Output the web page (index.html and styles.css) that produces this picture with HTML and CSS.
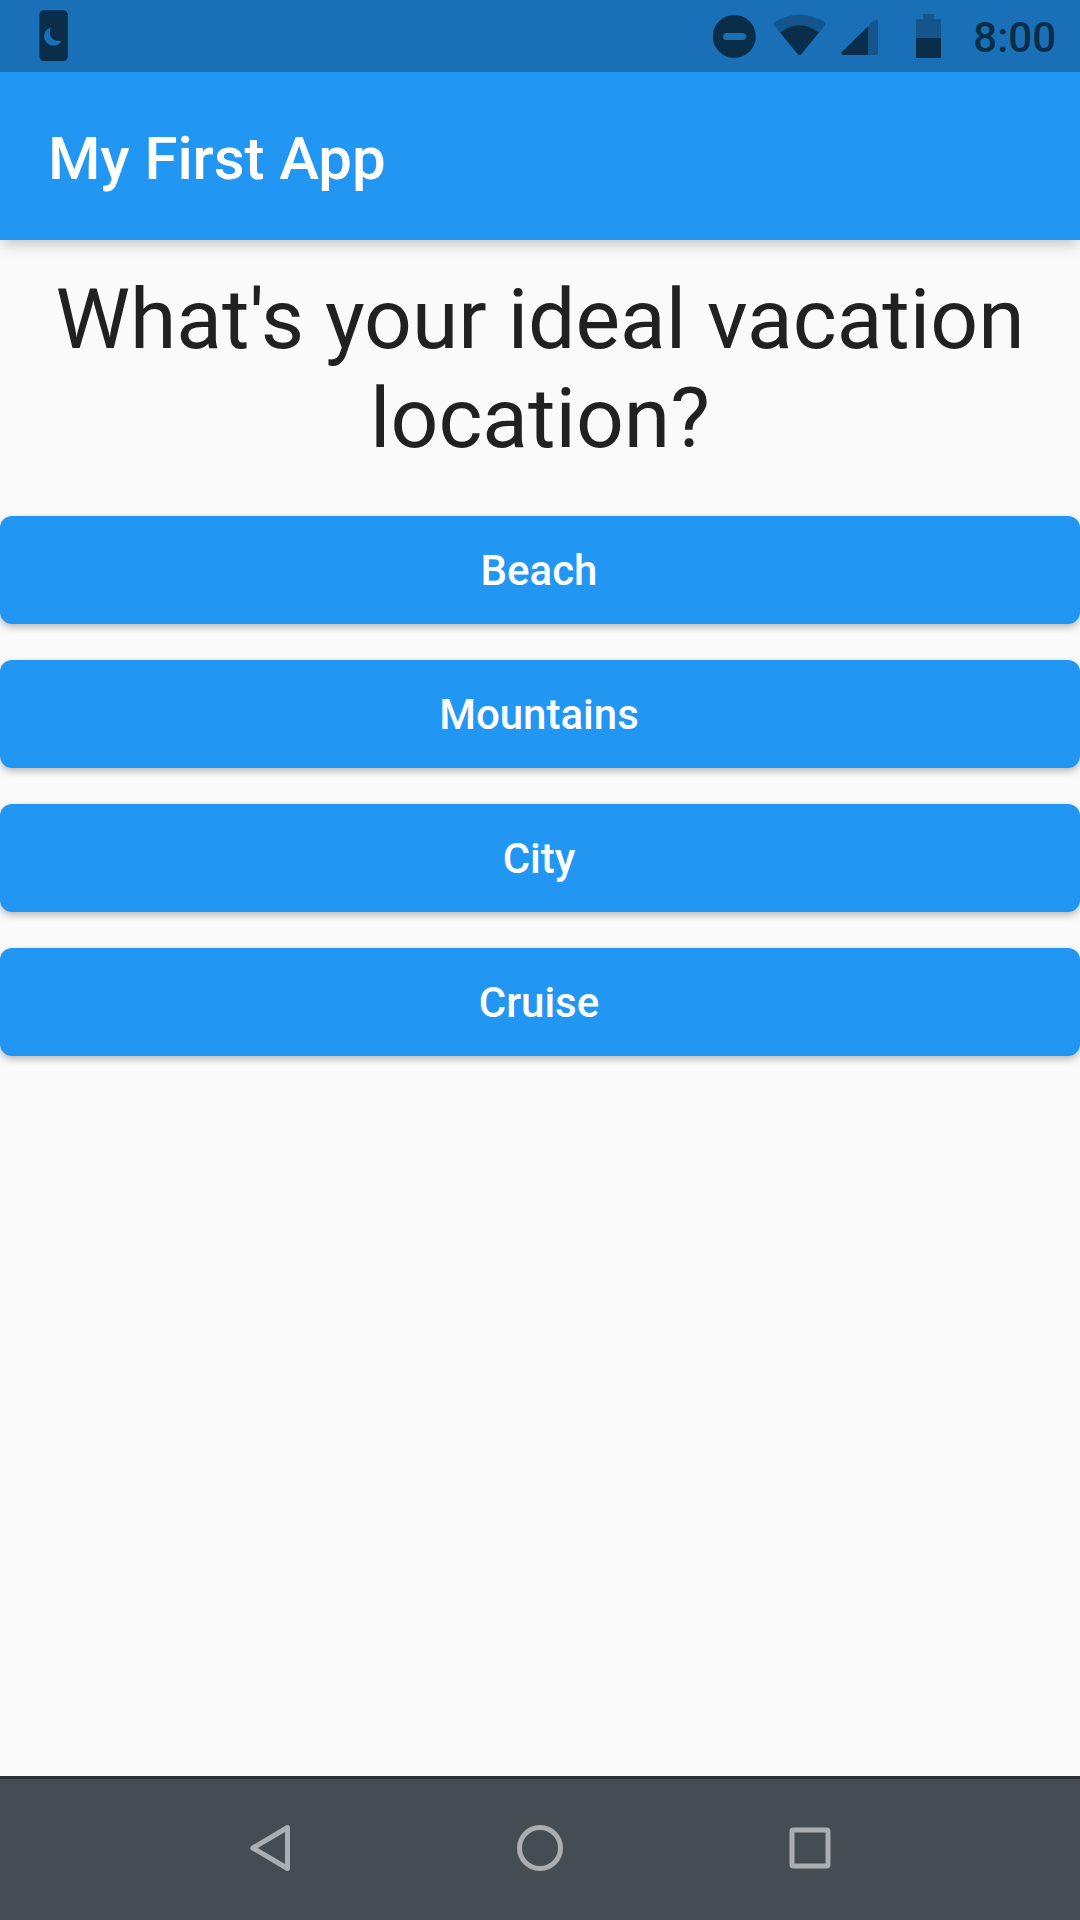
FILE: index.html
```html
<!DOCTYPE html>
<html lang="en">
<head>
<meta charset="utf-8">
<title>My First App</title>
<link rel="stylesheet" href="styles.css">
</head>
<body>
<div class="screen">
  <div class="status-bar">
    <svg class="status-left" width="100" height="72" viewBox="0 0 100 72">
      <rect class="ink" x="39.4" y="10.300" width="28.400" height="50.700" rx="4.5"/>
      <path class="cutout" d="M50.8 27.5A9.3 9.3 0 1 0 61.6 40.8C52.500 42.500 47.500 35 50.800 27.500Z"/>
    </svg>
    <div class="status-right">
      <svg width="250" height="72" viewBox="700 0 250 72">
        <circle class="ink" cx="734.300" cy="36.400" r="21.500"/>
        <rect class="cutout" x="723" y="33" width="23" height="7" rx="3.500"/>
        <path class="ink faint" d="M774.500 25.800Q773 23.500 775 22Q799.500 7 824 22Q826 23.500 824.500 25.800L819 32.500Q799.500 18.500 780 32.500Z"/>
        <path class="ink" d="M780 32.500Q799.500 18 819 32.500L801.500 54Q799.500 56 797.500 54Z"/>
        <path class="ink faint" d="M868 26.500L874.500 20Q876.500 18.500 878 20V53Q878 55 876 55H868Z"/>
        <path class="ink" d="M868 26.500V55H843Q840.500 54 842 51.800Z"/>
        <path class="ink faint" d="M916 38V19H923V14H934V19H941V38Z"/>
        <rect class="ink" x="916" y="38" width="25" height="20"/>
      </svg>
      <span class="clock">8:00</span>
    </div>
  </div>
  <header class="app-bar"><h1 class="title">My First App</h1></header>
  <main class="content">
    <h2 class="question">What's your ideal vacation location?</h2>
    <div class="answers">
      <button class="answer">Beach</button>
      <button class="answer">Mountains</button>
      <button class="answer">City</button>
      <button class="answer">Cruise</button>
    </div>
  </main>
  <nav class="nav-bar">
    <svg class="nav-icon" viewBox="0 0 60 60"><path d="M12.800 30L47.500 9.500V50.500Z"/></svg>
    <svg class="nav-icon" viewBox="0 0 60 60"><circle cx="30" cy="30" r="20.500"/></svg>
    <svg class="nav-icon" viewBox="0 0 60 60"><rect x="12" y="12" width="36" height="36" rx="1.500"/></svg>
  </nav>
</div>
</body>
</html>
```
FILE: styles.css
```css
* { box-sizing: border-box; }

body {
  margin: 0;
  font-family: Roboto, "Liberation Sans", sans-serif;
}

.screen {
  width: 1080px;
  height: 1920px;
  display: flex;
  flex-direction: column;
  background: #fafafa;
  overflow: hidden;
}

.status-bar {
  flex: none;
  height: 72px;
  display: flex;
  justify-content: space-between;
  background: #1a70b7;
  z-index: 1;
}

.status-left, .status-right svg { display: block; }
.status-right { display: flex; align-items: center; padding-right: 24px; }
.ink { fill: #0a2d49; }
.faint { fill: #14558b; }
.cutout { fill: #1a70b7; }

.clock {
  width: 106px;
  padding-top: 4px;
  text-align: right;
  font-size: 42px;
  line-height: 50px;
  font-weight: 500;
  color: #0a2d49;
}

.app-bar {
  flex: none;
  height: 168px;
  display: flex;
  align-items: center;
  padding: 6px 48px 0;
  background: #2196f3;
  box-shadow: 0 6px 12px -3px rgba(0, 0, 0, .17), 0 9px 15px rgba(0, 0, 0, .06);
}

.title {
  margin: 0;
  font-size: 60px;
  line-height: 70px;
  font-weight: 500;
  letter-spacing: -.1px;
  color: #fff;
}

.content { flex: 1; }

.question {
  margin: 30px;
  font-size: 84px;
  line-height: 99px;
  font-weight: 400;
  text-align: center;
  color: #212121;
}

.answers { display: flex; flex-direction: column; gap: 36px; padding-top: 18px; }

.answer {
  height: 108px;
  padding: 2px 2px 0 0;
  border: 0;
  border-radius: 12px;
  background: #2196f3;
  color: #fff;
  font: 500 42px/50px Roboto, "Liberation Sans", sans-serif;
  box-shadow: 0 3px 6px rgba(0, 0, 0, .2), 0 4px 12px rgba(0, 0, 0, .08);
}

.nav-bar {
  flex: none;
  height: 144px;
  display: flex;
  justify-content: center;
  align-items: center;
  gap: 210px;
  padding-bottom: 3px;
  border-top: 3px solid #2a3136;
  background: #454d52;
}

.nav-icon {
  width: 60px;
  height: 60px;
  fill: none;
  stroke: #abafb1;
  stroke-width: 5;
  stroke-linejoin: round;
}
```
